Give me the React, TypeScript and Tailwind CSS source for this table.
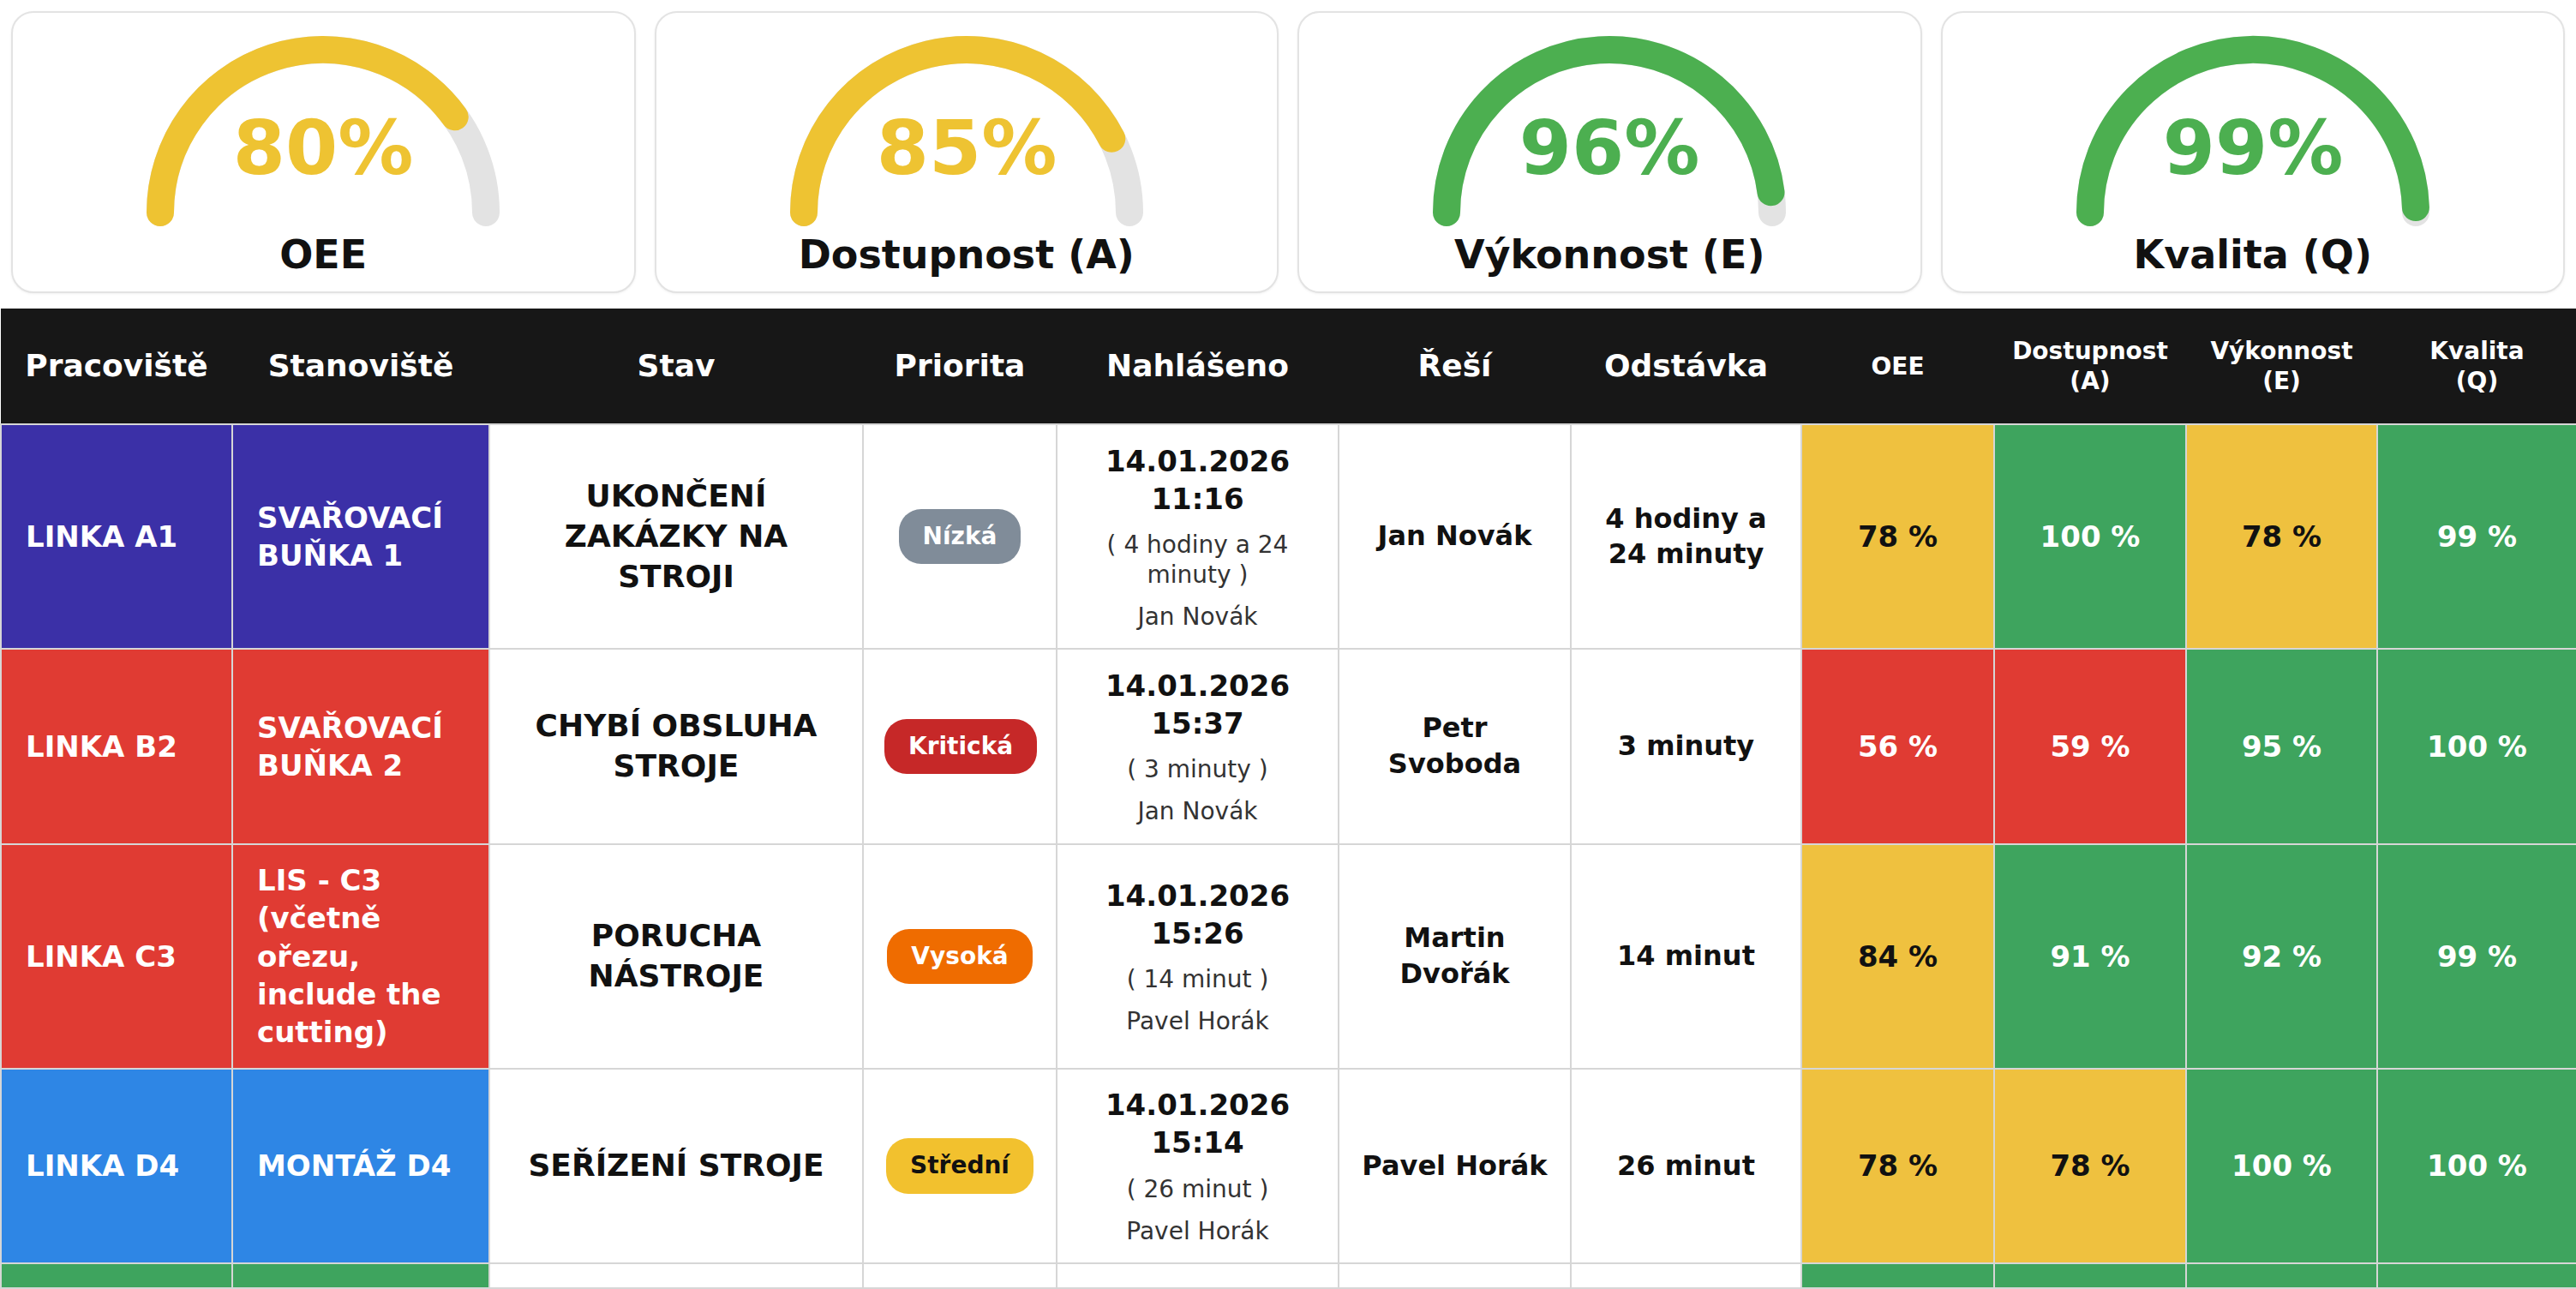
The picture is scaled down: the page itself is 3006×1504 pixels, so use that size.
const gauges = [
  { label: "OEE", value: 80, color: "#eec332" },
  { label: "Dostupnost (A)", value: 85, color: "#eec332" },
  { label: "Výkonnost (E)", value: 96, color: "#4caf50" },
  { label: "Kvalita (Q)", value: 99, color: "#4caf50" },
];

type Tone = "y" | "g" | "r";

const rows = [
  {
    line: "LINKA A1",
    station: "SVAŘOVACÍ BUŇKA 1",
    rowBg: "bg-[#3b30a7]",
    state: "UKONČENÍ ZAKÁZKY NA STROJI",
    priority: "Nízká",
    reported: "14.01.2026 11:16",
    ago: "( 4 hodiny a 24 minuty )",
    reporter: "Jan Novák",
    solver: "Jan Novák",
    downtime: "4 hodiny a 24 minuty",
    metrics: [
      ["78 %", "y"],
      ["100 %", "g"],
      ["78 %", "y"],
      ["99 %", "g"],
    ] as [string, Tone][],
  },
  {
    line: "LINKA B2",
    station: "SVAŘOVACÍ BUŇKA 2",
    rowBg: "bg-[#e03b33]",
    state: "CHYBÍ OBSLUHA STROJE",
    priority: "Kritická",
    reported: "14.01.2026 15:37",
    ago: "( 3 minuty )",
    reporter: "Jan Novák",
    solver: "Petr Svoboda",
    downtime: "3 minuty",
    metrics: [
      ["56 %", "r"],
      ["59 %", "r"],
      ["95 %", "g"],
      ["100 %", "g"],
    ] as [string, Tone][],
  },
  {
    line: "LINKA C3",
    station: "LIS - C3 (včetně ořezu, include the cutting)",
    rowBg: "bg-[#e03b33]",
    state: "PORUCHA NÁSTROJE",
    priority: "Vysoká",
    reported: "14.01.2026 15:26",
    ago: "( 14 minut )",
    reporter: "Pavel Horák",
    solver: "Martin Dvořák",
    downtime: "14 minut",
    metrics: [
      ["84 %", "y"],
      ["91 %", "g"],
      ["92 %", "g"],
      ["99 %", "g"],
    ] as [string, Tone][],
  },
  {
    line: "LINKA D4",
    station: "MONTÁŽ D4",
    rowBg: "bg-[#2e86e5]",
    state: "SEŘÍZENÍ STROJE",
    priority: "Střední",
    reported: "14.01.2026 15:14",
    ago: "( 26 minut )",
    reporter: "Pavel Horák",
    solver: "Pavel Horák",
    downtime: "26 minut",
    metrics: [
      ["78 %", "y"],
      ["78 %", "y"],
      ["100 %", "g"],
      ["100 %", "g"],
    ] as [string, Tone][],
  },
  {
    line: "LINKA E5",
    station: "LAKOVNA E5 (ruční lakování, manual painting line)",
    rowBg: "bg-[#3ea45e]",
    state: "ČEKÁNÍ NA MATERIÁL",
    priority: "Nízká",
    reported: "14.01.2026 15:02",
    ago: "( 38 minut )",
    reporter: "Petr Svoboda",
    solver: "Petr Svoboda",
    downtime: "38 minut",
    metrics: [
      ["97 %", "g"],
      ["98 %", "g"],
      ["99 %", "g"],
      ["100 %", "g"],
    ] as [string, Tone][],
  },
];

const toneClass: Record<Tone, string> = {
  y: "bg-[#efc13f] text-[#111]",
  g: "bg-[#3ea45e] text-white",
  r: "bg-[#e03b33] text-white",
};

const pillClass: Record<string, string> = {
  "Nízká": "bg-[#808c99] text-white",
  "Kritická": "bg-[#c62828] text-white",
  "Vysoká": "bg-[#ef6c00] text-white",
  "Střední": "bg-[#f2c12e] text-[#111]",
};

const colWidths = [270, 300, 436, 226, 329, 271, 269, 225, 224, 223, 233];

function arcPoint(p: number) {
  const cx = 210;
  const cy = 207;
  const r = 190;
  const a = Math.PI * (1 - p);
  return [cx + r * Math.cos(a), cy - r * Math.sin(a)];
}

const Gauge = ({ label, value, color }: { label: string; value: number; color: string }) => {
  const [x, y] = arcPoint(value / 100);
  return (
    <div className="flex-1 h-[329px] rounded-[26px] border-2 border-[#e3e3e3] bg-white shadow-[0_1px_3px_rgba(0,0,0,0.06)] flex flex-col items-center pt-[26px]">
      <svg width="420" height="225" viewBox="0 0 420 225">
        <path d="M 20 207 A 190 190 0 0 1 400 207" fill="none" stroke="#e3e3e3" strokeWidth="32" strokeLinecap="round" />
        <path d={`M 20 207 A 190 190 0 0 1 ${x.toFixed(2)} ${y.toFixed(2)}`} fill="none" stroke={color} strokeWidth="32" strokeLinecap="round" />
        <text x="210" y="162" textAnchor="middle" fill={color} fontFamily="DejaVu Sans, sans-serif" fontWeight="bold" fontSize="88">
          {value}%
        </text>
      </svg>
      <div className="mt-[4px] text-[46px] leading-[1.2] font-bold text-[#111]">{label}</div>
    </div>
  );
};

const th = "bg-[#171717] text-white font-bold text-center align-middle px-[16px] py-[32px]";
const td = "border-2 border-[#d6d6d6] px-[24px] py-[19.5px] align-middle";

export default function App() {
  return (
    <div className="h-screen flex flex-col bg-white font-['DejaVu_Sans',sans-serif] text-[#111]">
      {/* Gauges */}
      <div className="flex gap-[22px] px-[13px] pt-[13px] pb-[18px]">
        {gauges.map((g) => (
          <Gauge key={g.label} {...g} />
        ))}
      </div>

      {/* Table */}
      <div className="flex-1 min-h-0 overflow-hidden border-b-2 border-[#d6d6d6]">
        <table className="w-full table-fixed border-collapse">
          <colgroup>
            {colWidths.map((w, i) => (
              <col key={i} style={{ width: w }} />
            ))}
          </colgroup>
          <thead>
            <tr>
              <th className={`${th} text-[36px] leading-[1.3]`}>Pracoviště</th>
              <th className={`${th} text-[36px] leading-[1.3]`}>Stanoviště</th>
              <th className={`${th} text-[36px] leading-[1.3]`}>Stav</th>
              <th className={`${th} text-[36px] leading-[1.3]`}>Priorita</th>
              <th className={`${th} text-[36px] leading-[1.3]`}>Nahlášeno</th>
              <th className={`${th} text-[36px] leading-[1.3]`}>Řeší</th>
              <th className={`${th} text-[36px] leading-[1.3]`}>Odstávka</th>
              <th className={`${th} text-[28px] leading-[1.25]`}>OEE</th>
              <th className={`${th} text-[28px] leading-[1.25]`}>
                Dostupnost
                <br />
                (A)
              </th>
              <th className={`${th} text-[28px] leading-[1.25]`}>
                Výkonnost
                <br />
                (E)
              </th>
              <th className={`${th} text-[28px] leading-[1.25]`}>
                Kvalita
                <br />
                (Q)
              </th>
            </tr>
          </thead>
          <tbody>
            {rows.map((r) => (
              <tr key={r.line}>
                <td className={`${td} px-[28px] ${r.rowBg} text-white text-[34px] leading-[1.3] font-bold`}>{r.line}</td>
                <td className={`${td} px-[28px] ${r.rowBg} text-white text-[34px] leading-[1.3] font-bold`}>{r.station}</td>
                <td className={`${td} bg-white text-center text-[36px] leading-[1.3] font-bold`}>{r.state}</td>
                <td className={`${td} bg-white text-center`}>
                  <span className={`inline-block whitespace-nowrap rounded-[26px] px-[28px] py-[14px] text-[28px] leading-[1.3] font-bold ${pillClass[r.priority]}`}>
                    {r.priority}
                  </span>
                </td>
                <td className={`${td} bg-white text-center`}>
                  <div className="text-[34px] leading-[1.3] font-bold">{r.reported}</div>
                  <div className="mt-[14px] text-[28px] leading-[1.25] text-[#333]">{r.ago}</div>
                  <div className="mt-[14px] text-[28px] leading-[1.25] text-[#333]">{r.reporter}</div>
                </td>
                <td className={`${td} bg-white text-center text-[32px] leading-[1.3] font-bold`}>{r.solver}</td>
                <td className={`${td} bg-white text-center text-[32px] leading-[1.3] font-bold`}>{r.downtime}</td>
                {r.metrics.map(([v, t], i) => (
                  <td key={i} className={`${td} ${toneClass[t]} text-center text-[34px] leading-[1.3] font-bold`}>
                    {v}
                  </td>
                ))}
              </tr>
            ))}
          </tbody>
        </table>
      </div>
    </div>
  );
}
